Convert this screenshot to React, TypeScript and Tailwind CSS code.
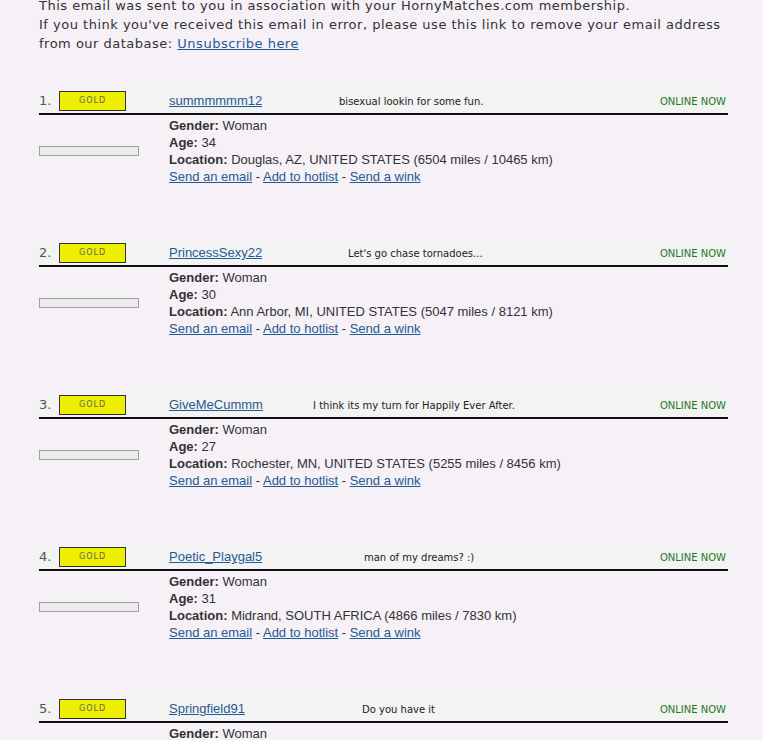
import React from "react";

type Member = {
  n: number;
  name: string;
  tag: string;
  tagOffset: number;
  age: number;
  location: string;
};

const members: Member[] = [
  { n: 1, name: "summmmmm12", tag: "bisexual lookin for some fun.", tagOffset: 39, age: 34, location: "Douglas, AZ, UNITED STATES (6504 miles / 10465 km)" },
  { n: 2, name: "PrincessSexy22", tag: "Let's go chase tornadoes...", tagOffset: 48, age: 30, location: "Ann Arbor, MI, UNITED STATES (5047 miles / 8121 km)" },
  { n: 3, name: "GiveMeCummm", tag: "I think its my turn for Happily Ever After.", tagOffset: 13, age: 27, location: "Rochester, MN, UNITED STATES (5255 miles / 8456 km)" },
  { n: 4, name: "Poetic_Playgal5", tag: "man of my dreams? :)", tagOffset: 64, age: 31, location: "Midrand, SOUTH AFRICA (4866 miles / 7830 km)" },
  { n: 5, name: "Springfield91", tag: "Do you have it", tagOffset: 62, age: 22, location: "Springfield, IL, UNITED STATES (4102 miles / 6601 km)" },
];

const verdana = "font-['DejaVu_Sans',Verdana,sans-serif]";
const arial = "font-['Liberation_Sans',Arial,sans-serif]";

function Row({ m }: { m: Member }) {
  return (
    <div className="mb-[56px]">
      <div className="flex h-[26px] items-center border-b-2 border-[#111] bg-[#f3f3f3]">
        <div className="flex w-[130px] items-center">
          <span className={`${verdana} w-[20px] text-[13px] text-[#555]`}>{m.n}.</span>
          <span className="flex h-[20px] w-[67px] items-center justify-center border border-[#333] bg-[#eeee00]">
            <span className={`${verdana} text-[8px] tracking-[1px] text-[#666]`}>GOLD</span>
          </span>
        </div>
        <a href="#" className={`${arial} w-[131px] text-[13px] text-[#1f5a92] underline`}>
          {m.name}
        </a>
        <span
          className={`${verdana} flex-1 text-[10px] text-[#222]`}
          style={{ paddingLeft: m.tagOffset }}
        >
          {m.tag}
        </span>
        <span className={`${verdana} pr-[2px] text-right text-[10px] text-[#1a7a1a]`}>ONLINE NOW</span>
      </div>
      <div className="flex pt-[2px]">
        <div className="flex w-[130px] items-center">
          <div className="h-[10px] w-[100px] border border-[#a0a0a0] bg-[#ebebeb]" />
        </div>
        <div className={`${arial} text-[13px] leading-[17px] text-[#333]`}>
          <div>
            <b>Gender:</b> Woman
          </div>
          <div>
            <b>Age:</b> {m.age}
          </div>
          <div>
            <b>Location:</b> {m.location}
          </div>
          <div>
            <a href="#" className="text-[#1f5a92] underline">Send an email</a>
            {" - "}
            <a href="#" className="text-[#1f5a92] underline">Add to hotlist</a>
            {" - "}
            <a href="#" className="text-[#1f5a92] underline">Send a wink</a>
          </div>
        </div>
      </div>
    </div>
  );
}

export default function App() {
  return (
    <div className="min-h-screen overflow-hidden bg-[#f6f0f7] pl-[39px]">
      <div className="w-[689px]">
        <p className={`${verdana} -mt-[4px] whitespace-nowrap text-[13px] leading-[19px] tracking-[0.5px] text-[#333]`}>
          This email was sent to you in association with your HornyMatches.com membership.
          <br />
          If you think you've received this email in error, please use this link to remove your email address
          <br />
          from our database:{" "}
          <a href="#" className="text-[#1f5a92] underline">Unsubscribe here</a>
        </p>
        <div className="mt-[36px]">
          {members.map((m) => (
            <Row key={m.n} m={m} />
          ))}
        </div>
      </div>
    </div>
  );
}
